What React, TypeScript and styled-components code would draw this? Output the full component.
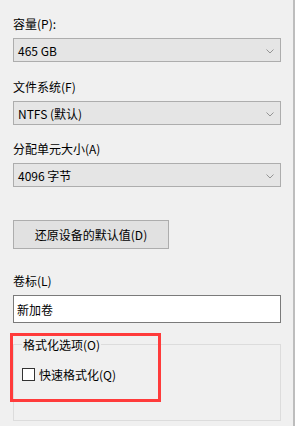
import styled, {createGlobalStyle} from "styled-components";

const GlobalStyle = createGlobalStyle`
    html, body {
        margin: 0;
        padding: 0;
        background: #ffffff;
    }
    body {
        font-family: "Noto Sans CJK SC", "Microsoft YaHei", sans-serif;
        font-size: 12px;
        color: #000000;
    }
`;

const Panel = styled.div`
    position: relative;
    height: 426px;
    padding: 15px 0 0 13px;
    box-sizing: border-box;
    width: 295px;
    background: #f0f0f0;
    border-right: 2px solid #bdbdbd;
    display: flex;
    flex-direction: column;
`;

const Column = styled.div`
    width: 268px;
    display: flex;
    flex-direction: column;
`;

const Label = styled.div<{ $top?: number; }>`
    height: 17px;
    line-height: 17px;
    margin-top: ${props => props.$top ?? 0}px;
    margin-bottom: 6px;
    white-space: nowrap;
`;

const Select = styled.div`
    height: 24px;
    box-sizing: border-box;
    border: 1px solid #adadad;
    background: #e5e5e5;
    display: flex;
    align-items: center;
    justify-content: space-between;
    padding: 0 6px 0 4px;
`;

const SelectText = styled.span`
    line-height: 17px;
`;

const Chevron = styled.svg`
    width: 8px;
    height: 5px;
    margin-top: 2px;
`;

const ResetButton = styled.button`
    margin-top: 33px;
    width: 156px;
    height: 29px;
    box-sizing: border-box;
    border: 1px solid #adadad;
    background: #e1e1e1;
    font: inherit;
    color: #000000;
    padding: 0;
`;

const TextInput = styled.input`
    height: 28px;
    box-sizing: border-box;
    border: 1px solid #7a7a7a;
    background: #ffffff;
    font: inherit;
    padding: 0 5px 0 3px;
    outline: none;
`;

const GroupBox = styled.fieldset`
    margin: 13px 0 0 0;
    height: 85px;
    box-sizing: border-box;
    border: 1px solid #dcdcdc;
    padding: 13px 8px 0 8px;
`;

const GroupLegend = styled.legend`
    padding: 0 1px;
    line-height: 17px;
    margin-left: 0;
`;

const CheckRow = styled.label`
    display: flex;
    align-items: center;
    gap: 4px;
    line-height: 17px;
`;

const CheckBox = styled.span`
    width: 13px;
    height: 13px;
    box-sizing: border-box;
    border: 1px solid #333333;
    background: #ffffff;
`;

const Highlight = styled.div`
    position: absolute;
    left: 10px;
    top: 333px;
    width: 151px;
    height: 69px;
    box-sizing: border-box;
    border: 3px solid #ff3b3b;
    pointer-events: none;
`;

function Dropdown({value}: { value: string }) {
  return <Select>
    <SelectText>{value}</SelectText>
    <Chevron viewBox="0 0 8 5">
      <path d="M0.5 0.5 L4 4 L7.5 0.5" fill="none" stroke="#8a8a8a" strokeWidth="0.9"/>
    </Chevron>
  </Select>
}

export default function App() {
  return <>
    <GlobalStyle/>
    <Panel>
      <Column>
        <Label>容量(P):</Label>
        <Dropdown value="465 GB"/>
        <Label $top={16}>文件系统(F)</Label>
        <Dropdown value="NTFS (默认)"/>
        <Label $top={15}>分配单元大小(A)</Label>
        <Dropdown value="4096 字节"/>
        <ResetButton>还原设备的默认值(D)</ResetButton>
        <Label $top={23}>卷标(L)</Label>
        <TextInput defaultValue="新加卷"/>
        <GroupBox>
          <GroupLegend>格式化选项(O)</GroupLegend>
          <CheckRow>
            <CheckBox/>
            快速格式化(Q)
          </CheckRow>
        </GroupBox>
      </Column>
      <Highlight/>
    </Panel>
  </>
}
